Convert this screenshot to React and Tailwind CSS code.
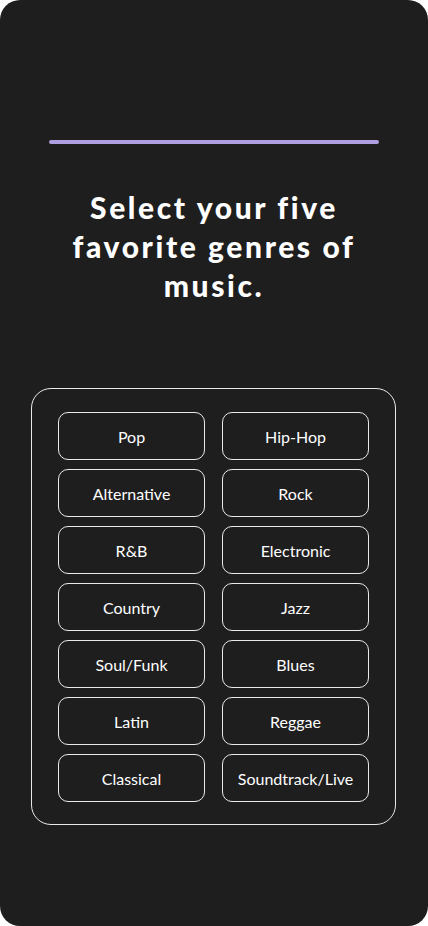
const genres = [
  "Pop",
  "Hip-Hop",
  "Alternative",
  "Rock",
  "R&B",
  "Electronic",
  "Country",
  "Jazz",
  "Soul/Funk",
  "Blues",
  "Latin",
  "Reggae",
  "Classical",
  "Soundtrack/Live",
];

export default function App() {
  return (
    <div className="w-[428px] h-[926px] bg-white">
      <div
        className="w-full h-full rounded-[20px] bg-[#1e1e1e] flex flex-col items-center pt-[140px]"
        style={{ fontFamily: "Lato, 'Noto Sans', sans-serif" }}
      >
        {/* progress bar */}
        <div className="w-[330px] h-1 rounded-full bg-[#b09fe0]" />

        <h1 className="mt-[44px] text-center text-white font-black text-[30px] leading-[39px] tracking-[2.6px]">
          Select your five
          <br />
          favorite genres of
          <br />
          music.
        </h1>

        <div className="self-start ml-[31px] mt-[83px] w-[365px] rounded-[20px] border border-white/90 px-[26px] pt-[23px] pb-[22px]">
          <div className="grid grid-cols-[147px_147px] gap-x-[17px] gap-y-[9px]">
            {genres.map((g) => (
              <button
                key={g}
                type="button"
                className="h-12 pt-px rounded-[10px] border border-white/90 text-white text-[16px] flex items-center justify-center"
              >
                {g}
              </button>
            ))}
          </div>
        </div>
      </div>
    </div>
  );
}
